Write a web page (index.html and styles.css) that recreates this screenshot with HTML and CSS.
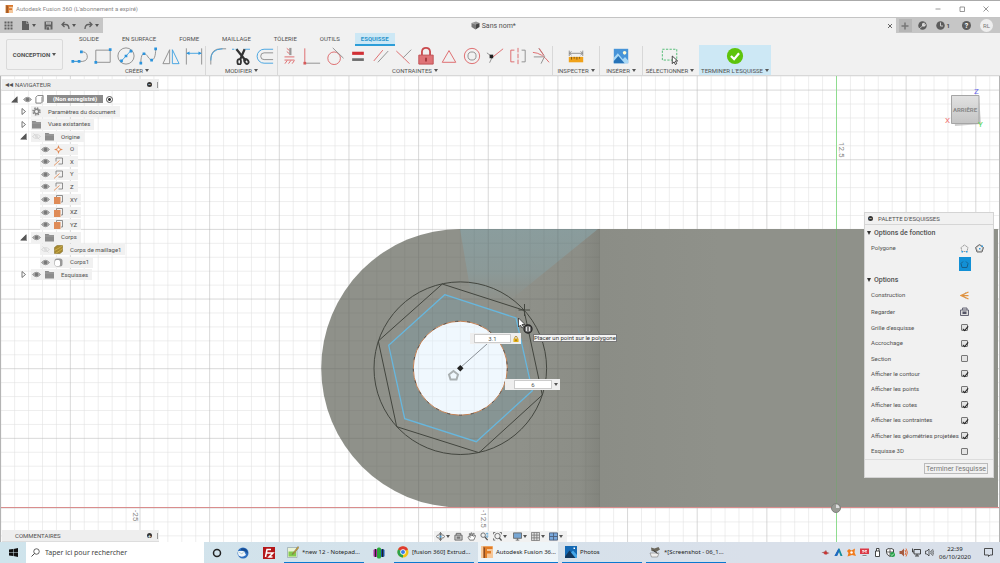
FILE: index.html
```html
<!DOCTYPE html>
<html lang="fr">
<head>
    <meta charset="UTF-8">
    <meta name="viewport" content="width=device-width, initial-scale=1.0">
    <title>Autodesk Fusion 360</title>
    <link rel="stylesheet" href="styles.css">
</head>
<body>
    <!-- Icônes partagées -->
    <svg class="sprite" aria-hidden="true">
        <symbol id="eye" viewBox="0 0 18 18"><path d="M1 9Q9 0 17 9Q9 18 1 9Z" fill="#b5b5b5" stroke="#858585" stroke-width="1.5"/><circle cx="9" cy="9" r="3.6" fill="#777"/></symbol>
        <symbol id="eye-off" viewBox="0 0 18 18"><path d="M1 9Q9 1 17 9Q9 17 1 9ZM3 3L15 15" fill="none" stroke="#d2d2d2" stroke-width="1.6"/><circle cx="9" cy="9" r="3" fill="#dcdcdc"/></symbol>
        <symbol id="folder" viewBox="0 0 18 18"><path d="M0 2h7l2 2h9v13H0z" fill="#8c8c8c"/><path d="M0 6h18" stroke="#b5b5b5"/></symbol>
        <symbol id="axis" viewBox="0 0 18 18"><path d="M4 9V2H17V14H9" fill="none" stroke="#777" stroke-width="1.6"/><path d="M0 17L11 7" stroke="#e39a6c" stroke-width="2"/></symbol>
        <symbol id="plane" viewBox="0 0 18 18"><path d="M5 4V1H17V14H14" fill="none" stroke="#777" stroke-width="1.6"/><path d="M0 4H13V18H0Z" fill="#df8b57"/></symbol>
        <symbol id="open" viewBox="0 0 14 14"><path d="M14 0V14H0Z" fill="#999"/><path d="M12 1V12H1Z" fill="#555"/></symbol>
        <symbol id="closed" viewBox="0 0 14 14"><path d="M4 1V13L11 7Z" fill="#fff" stroke="#666" stroke-width="1.8"/></symbol>
    </svg>

    <header class="titlebar">
        <svg class="i8" viewBox="0 0 24 24"><path d="M0 0H24V24H0Z" fill="#f3c79d"/><path d="M4 0H24V5H12V10H21V15H12V24H4Z" fill="#d8782d"/><path d="M4 0L8 3V24H4Z" fill="#8e4d20"/></svg>
        <span class="app-name">Autodesk Fusion 360 (L'abonnement a expiré)</span>
        <button class="win" aria-label="Réduire"><svg viewBox="0 0 12 12"><path d="M1 6H11"/></svg></button>
        <button class="win" aria-label="Agrandir"><svg viewBox="0 0 12 12"><path d="M2 2H11V11H2Z"/></svg></button>
        <button class="win" aria-label="Fermer"><svg viewBox="0 0 12 12"><path d="M1 1L11 11M11 1L1 11"/></svg></button>
    </header>

    <div class="docbar">
        <div class="quick">
            <button aria-label="Données"><svg class="i9" viewBox="0 0 18 18"><path d="M1 1h4v4H1zM7 1h4v4H7zM13 1h4v4h-4zM1 7h4v4H1zM7 7h4v4H7zM13 7h4v4h-4zM1 13h4v4H1zM7 13h4v4H7zM13 13h4v4h-4z" fill="#606060"/></svg></button>
            <button class="drop" aria-label="Fichier"><svg class="i9" viewBox="0 0 18 18"><path d="M2 0h9v6h5v12H2zM12 0l4 5h-4z" fill="#606060"/></svg></button>
            <button aria-label="Enregistrer"><svg class="i9" viewBox="0 0 18 18"><path d="M1 1h16v16H1z" fill="#606060"/><path d="M4 2h10v5H4zM5 11h8v6H5z" fill="#c6c6c6"/><path d="M5 4h8M6 13h4v4H6z" fill="#606060" stroke="#606060"/></svg></button>
            <button class="drop" aria-label="Annuler"><svg class="i9" viewBox="0 0 18 18"><path d="M7 2L2 7L7 12M2 7H9Q16 7 16 16" fill="none" stroke="#606060" stroke-width="2.6"/></svg></button>
            <button class="drop" aria-label="Rétablir"><svg class="i9" viewBox="0 0 18 18"><path d="M11 2L16 7L11 12M16 7H9Q2 7 2 16" fill="none" stroke="#606060" stroke-width="2.6"/></svg></button>
        </div>
        <div class="doc-tab">
            <svg class="i9" viewBox="0 0 18 18"><path d="M1 4L10 1L17 4L10 7Z" fill="#999"/><path d="M1 4L9 7V17L1 12Z" fill="#777"/><path d="M9 7L17 4V12L9 17Z" fill="#444"/></svg>
            <span>Sans nom*</span>
        </div>
        <button class="doc-close" aria-label="Fermer le document"><svg viewBox="0 0 12 12"><path d="M2 2L10 10M10 2L2 10" stroke="#666" stroke-width="2"/></svg></button>
        <div class="account">
            <button class="plus" aria-label="Nouveau"><svg class="i8" viewBox="0 0 16 16"><path d="M8 1V15M1 8H15" stroke="#777" stroke-width="3"/></svg></button>
            <button aria-label="Extensions"><svg class="i9" viewBox="0 0 18 18"><circle cx="9" cy="9" r="8.5" fill="#5c5c5c"/><path d="M2 16L10 9M9 9Q7 4 13 4L11 8L15 7Q15 12 9 10Z" fill="#ddd" stroke="#ddd" stroke-width="1.5"/></svg></button>
            <button class="jobs"><svg class="i9" viewBox="0 0 18 18"><circle cx="9" cy="9" r="8.5" fill="#5c5c5c"/><path d="M9 3V10H14" fill="none" stroke="#ccc" stroke-width="2"/></svg>1</button>
            <button class="help">?</button>
            <button class="avatar">RL</button>
        </div>
    </div>

    <div class="ribbon">
        <button class="workspace drop">CONCEPTION</button>
        <div class="ribbon-main">
            <nav class="tabs">
                <a href="#">SOLIDE</a>
                <a href="#">EN SURFACE</a>
                <a href="#">FORME</a>
                <a href="#">MAILLAGE</a>
                <a href="#">TÔLERIE</a>
                <a href="#">OUTILS</a>
                <a href="#" class="active">ESQUISSE</a>
            </nav>
            <div class="groups">
                <section class="group create">
                    <div class="tools">
                        <button aria-label="Ligne"><svg viewBox="0 0 40 40"><path d="M4 32H26Q38 30 36 19Q34 10 24 11" class="g"/><path d="M4 32H18" class="b"/><path class="p" d="M1 29h6v6H1zM15 29h6v6h-6zM20 8h6v6h-6z"/></svg></button>
                        <button aria-label="Rectangle"><svg viewBox="0 0 40 40"><path d="M4 7H36V34H4Z" class="g"/><path class="p" d="M33 3h6v6h-6zM1 31h6v6H1z"/></svg></button>
                        <button aria-label="Cercle"><svg viewBox="0 0 40 40"><circle cx="20" cy="20" r="18" class="g"/><path d="M10 31L30 9" class="b"/><path class="p" d="M7 28h6v6H7zM17 17h6v6h-6zM28 6h6v6h-6z"/></svg></button>
                        <button aria-label="Spline"><svg viewBox="0 0 40 40"><path d="M4 37C4 8 14 12 20 22S37 34 37 4" class="g"/><path class="p" d="M1 33h6v6H1zM8 12h6v6H8zM25 26h6v6h-6zM34 1h6v6h-6z"/></svg></button>
                        <button aria-label="Symétrie"><svg viewBox="0 0 40 40"><path d="M17 6V37H2Z" class="g"/><path d="M23 6V37H38Z" class="b"/></svg></button>
                        <button aria-label="Cote"><svg viewBox="0 0 40 40"><path d="M3 3V39M37 3V39" class="g"/><path d="M4 14H36" class="b"/><path class="p" d="M3 14L10 10V18ZM37 14L30 10V18Z"/></svg></button>
                    </div>
                    <button class="group-name drop">CRÉER</button>
                </section>
                <section class="group modify">
                    <div class="tools">
                        <button aria-label="Congé"><svg viewBox="0 0 40 40"><path d="M4 39V24Q6 4 26 4H38" class="g"/><path d="M4 30Q3 5 30 4" class="b"/></svg></button>
                        <button aria-label="Ajuster"><svg viewBox="0 0 40 40"><path d="M0 5H15" class="b" stroke-dasharray="5 3"/><path d="M27 5H40" class="b"/><path d="M10 5L31 31M28 5L18 28" stroke="#333" stroke-width="5" fill="none"/><ellipse cx="16" cy="33" rx="4" ry="6" fill="none" stroke="#333" stroke-width="4"/><ellipse cx="32" cy="32" rx="4" ry="6" fill="none" stroke="#333" stroke-width="4" transform="rotate(-35 32 32)"/></svg></button>
                        <button aria-label="Décaler"><svg viewBox="0 0 40 40"><path d="M38 5H18A15 15 0 0 0 18 36H38" class="b" stroke-width="3"/><path d="M38 13H18A7 7 0 0 0 18 28H38" class="g" stroke-width="3"/></svg></button>
                    </div>
                    <button class="group-name drop">MODIFIER</button>
                </section>
                <section class="group constraints">
                    <div class="tools">
                        <button aria-label="Horizontal"><svg viewBox="0 0 40 40"><path d="M23 2V18" stroke="#999" stroke-width="5"/><path d="M15 3L21 8M15 10L21 15M10 22H32M10 29H32M11 37L16 30M19 37L24 30M27 37L32 30" class="r"/></svg></button>
                        <button aria-label="Coïncident"><svg viewBox="0 0 40 40"><path d="M4 36H38" class="g"/><path d="M4 3V36" class="r"/><path d="M1 33h6v6H1z" fill="#d65a5a"/></svg></button>
                        <button aria-label="Tangent"><svg viewBox="0 0 40 40"><circle cx="18" cy="25" r="14" class="r"/><path d="M15 2L39 25" class="g"/></svg></button>
                        <button aria-label="Égal"><svg viewBox="0 0 40 40"><path d="M7 14H33" stroke="#d12f35" stroke-width="7"/><path d="M7 28H33" stroke="#6d6d6d" stroke-width="6"/></svg></button>
                        <button aria-label="Parallèle"><svg viewBox="0 0 40 40"><path d="M4 31L24 7" class="r"/><path d="M13 34L36 9" class="g"/></svg></button>
                        <button aria-label="Perpendiculaire"><svg viewBox="0 0 40 40"><path d="M3 9L20 25L32 37" class="r"/><path d="M18 24L36 6" class="g"/></svg></button>
                        <button aria-label="Bloquer"><svg viewBox="0 0 40 40"><path d="M11 18V10Q12 2 20 2T29 10V18" fill="none" stroke="#c9484c" stroke-width="4"/><path d="M4 18H36V38H4Z" fill="#df7377" stroke="#bd4d51" stroke-width="2"/><path d="M20 24V32" stroke="#8b2226" stroke-width="3"/></svg></button>
                        <button aria-label="Milieu"><svg viewBox="0 0 40 40"><path d="M20 8L35 34H5Z" class="r"/></svg></button>
                        <button aria-label="Concentrique"><svg viewBox="0 0 40 40"><circle cx="20" cy="20" r="17" class="r"/><circle cx="20" cy="20" r="9" class="g"/></svg></button>
                        <button aria-label="Colinéaire"><svg viewBox="0 0 40 40"><path d="M2 13L14 22L8 35" class="g"/><path d="M13 24L38 4" class="r"/><path d="M8 17h8v8H8z" fill="#222"/></svg></button>
                        <button aria-label="Symétrique"><svg viewBox="0 0 40 40"><path d="M12 7H4V33H12" class="r"/><path d="M28 7H36V33H28" class="g"/><path d="M20 2V38" class="r" stroke-dasharray="10 3"/></svg></button>
                        <button aria-label="Courbure"><svg viewBox="0 0 40 40"><path d="M2 12Q22 13 38 34" class="r"/><path d="M15 3L28 21L20 37M4 22H24" class="g"/><path d="M16 3L26 18" class="r"/></svg></button>
                    </div>
                    <button class="group-name drop">CONTRAINTES</button>
                </section>
                <section class="group inspect">
                    <div class="tools"><button aria-label="Mesurer"><svg viewBox="0 0 40 40"><path d="M5 8V20M35 8V20M5 14H35M5 14L10 10M5 14L10 18M35 14L30 10M35 14L30 18" class="g"/><path d="M4 22H36V34H4Z" fill="#f0a21a"/><path d="M10 22V28M16 22V26M22 22V28M28 22V26" stroke="#805915" stroke-width="2"/></svg></button></div>
                    <button class="group-name drop">INSPECTER</button>
                </section>
                <section class="group insert">
                    <div class="tools"><button aria-label="Insérer"><svg viewBox="0 0 40 40"><path d="M4 4H36V36H4Z" fill="#4794d8"/><circle cx="28" cy="13" r="4" fill="#fffbd5"/><path d="M4 24L13 14L24 27L29 22L36 30V36H4Z" fill="#a8d8f6"/><path d="M4 31L14 20L28 36H4Z" fill="#2673b8"/></svg></button></div>
                    <button class="group-name drop">INSÉRER</button>
                </section>
                <section class="group select">
                    <div class="tools"><button aria-label="Sélectionner"><svg viewBox="0 0 40 40"><path d="M3 5H35V29H3Z" fill="none" stroke="#45b86b" stroke-width="2" stroke-dasharray="5 3"/><path d="M25 20V37L29 33L32 39L35 37L32 31H37Z" fill="#fff" stroke="#333" stroke-width="2"/></svg></button></div>
                    <button class="group-name drop">SÉLECTIONNER</button>
                </section>
                <section class="group finish">
                    <div class="tools"><button aria-label="Terminer l'esquisse"><svg viewBox="0 0 40 40"><circle cx="20" cy="20" r="18" fill="#5ec40c"/><path d="M11 20L18 27L29 14" fill="none" stroke="#fff" stroke-width="5"/></svg></button></div>
                    <button class="group-name drop">TERMINER L'ESQUISSE</button>
                </section>
            </div>
        </div>
    </div>

    <main class="canvas">
        <svg class="scene" viewBox="0 76 1000 466" preserveAspectRatio="xMidYMid slice">
            <defs>
                <pattern id="minor" x="836" y="507.5" width="13.93" height="13.93" patternUnits="userSpaceOnUse"><path d="M0 0H13.93M0 0V13.93" stroke="#000" stroke-opacity=".13" fill="none"/></pattern>
                <pattern id="major" x="836" y="507.5" width="69.65" height="69.65" patternUnits="userSpaceOnUse"><path d="M0 0H69.65M0 0V69.65" stroke="#000" stroke-opacity=".18" fill="none"/></pattern>
                <linearGradient id="shade"><stop offset="0" stop-color="#8f918a"/><stop offset=".75" stop-color="#8c8e87"/><stop offset="1" stop-color="#82847d"/></linearGradient>
                <linearGradient id="block"><stop offset="0" stop-color="#8b8d86"/><stop offset=".3" stop-color="#8f918a"/></linearGradient>
                <linearGradient id="beam" x2="0" y2="1"><stop offset="0" stop-color="#89a1a4" stop-opacity=".75"/><stop offset=".6" stop-color="#899fa1" stop-opacity=".6"/><stop offset="1" stop-color="#899a9c" stop-opacity="0"/></linearGradient>
                <linearGradient id="cube" x2="0" y2="1"><stop offset="0" stop-color="#e2e2e2"/><stop offset="1" stop-color="#c4c4c4"/></linearGradient>
            </defs>
            <path d="M0 76H1000V542H0Z" fill="#fff"/>
            <path d="M0 76H1000V542H0Z" fill="url(#minor)"/>
            <path d="M0 76H1000V542H0Z" fill="url(#major)"/>
            <path d="M600 229H460.500A139.250 139.250 0 0 0 460.500 507.500H600Z" fill="#8f918a"/>
            <path d="M520 229H600V507.500H520Z" fill="url(#shade)"/>
            <path d="M460 229H598L508 302L472 300Z" fill="url(#beam)"/>
            <path d="M444.700 294.700L516 318L532.300 390.700L476.300 441.700L404.700 418.700L388.700 345.300Z" fill="#879594"/>
            <circle cx="460.300" cy="368.200" r="47" fill="#f0f8fe"/>
            <!-- La grille transparaît à travers le corps -->
            <g opacity=".5">
                <path d="M321 229H600V507H321Z" fill="url(#minor)" clip-path="url(#body-clip)"/>
                <path d="M321 229H600V507H321Z" fill="url(#major)" clip-path="url(#body-clip)"/>
            </g>
            <clipPath id="body-clip"><path d="M600 229H460.500A139.250 139.250 0 0 0 460.500 507.500H600Z"/></clipPath>
            <path d="M600 229H998V507.500H600Z" fill="url(#block)"/>
            <path d="M0 507.500H1000" stroke="#d98d8d"/>
            <path d="M836.500 76V229M836.500 507V542" stroke="#8fdc8f"/>
            <path d="M836.500 229V507" stroke="#7f9c7a"/>
            <circle cx="836" cy="508" r="4.500" fill="#999b95" stroke="#80827d"/>
            <path d="M836 508V504.500A3.500 3.500 0 0 1 839.500 508Z" fill="#ddd"/>
            <circle cx="460.300" cy="368.200" r="47" fill="none" stroke="#c58255"/>
            <circle cx="460.300" cy="368.200" r="47" fill="none" stroke="#555" stroke-dasharray="3 9"/>
            <g fill="none" stroke="#43463f">
                <circle cx="460.300" cy="368.200" r="86.300"/>
                <path d="M442.300 284L524 310.300L542.300 395L479 452.700L396.700 426.700L378.300 341Z"/>
                <path d="M518.500 310H530M524.500 304V316"/>
            </g>
            <path d="M444.700 294.700L516 318L532.300 390.700L476.300 441.700L404.700 418.700L388.700 345.300Z" fill="none" stroke="#67b7de" stroke-width="1.300"/>
            <path d="M460 368L487 344" stroke="#8a9096"/>
            <path d="M460.300 365L463.500 368.300L460.300 371.500L457 368.300Z" fill="#222"/>
            <path d="M453.500 371L458 374.500L456.500 379.500H450.500L449 374.500Z" fill="none" stroke="#aab0b2" stroke-width="2"/>
            <circle cx="528" cy="329" r="4" fill="#777" stroke="#222" stroke-width="1.300"/>
            <path d="M526.500 327V331M529.500 327V331" stroke="#ddd"/>
            <path d="M518.500 318V327L520.500 325L522 328L523.500 327L522 324.500H525Z" fill="#fff" stroke="#222" stroke-width=".7"/>
            <text class="ruler" transform="translate(133 510) rotate(90)">-25</text>
            <text class="ruler" transform="translate(481 510) rotate(90)">-12.5</text>
            <text class="ruler" transform="translate(839 142) rotate(90)">12.5</text>
            <!-- Cube de visualisation -->
            <path d="M975.500 95V122" stroke="#aab"/>
            <path d="M952 97H979L981 124L955 126Z" fill="#999" opacity=".5"/>
            <path d="M951.500 95.500H979V123.500H951.500Z" fill="url(#cube)" stroke="#a5a5a5"/>
            <text class="cube-text" x="965" y="112" text-anchor="middle">ARRIÈRE</text>
            <text class="axis-text" x="974" y="94" fill="#6767ee">Z</text>
            <text class="axis-text" x="945" y="123" fill="#f07070">X</text>
            <text class="axis-text" x="978" y="127" fill="#4fdc4f">Y</text>
        </svg>

        <div class="panels">
            <aside class="browser">
                <header class="bar"><span class="arrows">◂◂</span><h2>NAVIGATEUR</h2><button class="round" aria-label="Réduire">−</button><i class="grip"></i></header>
                <ul class="tree">
                    <li class="l0"><svg class="tw"><use href="#open"/></svg><div class="item root"><svg><use href="#eye"/></svg><svg class="box" viewBox="0 0 20 20"><path d="M2 5L6 1H18V14L14 18H2Z" fill="#fff" stroke="#777" stroke-width="2"/><path d="M14 5V18L18 14V1Z" fill="#aaa"/></svg><span>(Non enregistré)</span><input type="radio" checked aria-label="Activer le composant"></div></li>
                    <li class="l1"><svg class="tw"><use href="#closed"/></svg><div class="item"><svg viewBox="0 0 18 18"><circle cx="9" cy="9" r="7" fill="none" stroke="#888" stroke-width="3" stroke-dasharray="3 2.500"/><circle cx="9" cy="9" r="4.500" fill="none" stroke="#888" stroke-width="3"/></svg><span>Paramètres du document</span></div></li>
                    <li class="l1"><svg class="tw"><use href="#closed"/></svg><div class="item"><svg><use href="#folder"/></svg><span>Vues existantes</span></div></li>
                    <li class="l1"><svg class="tw"><use href="#open"/></svg><div class="item"><svg><use href="#eye-off"/></svg><svg><use href="#folder"/></svg><span>Origine</span></div></li>
                    <li class="l2"><div class="item"><svg><use href="#eye"/></svg><svg viewBox="0 0 18 18"><path d="M9 0L11.500 6.500L18 9L11.500 11.500L9 18L6.500 11.500L0 9L6.500 6.500Z" fill="#e08a55"/><circle cx="9" cy="9" r="2.500" fill="#fff"/></svg><span>O</span></div></li>
                    <li class="l2"><div class="item"><svg><use href="#eye"/></svg><svg><use href="#axis"/></svg><span>X</span></div></li>
                    <li class="l2"><div class="item"><svg><use href="#eye"/></svg><svg><use href="#axis"/></svg><span>Y</span></div></li>
                    <li class="l2"><div class="item"><svg><use href="#eye"/></svg><svg><use href="#axis"/></svg><span>Z</span></div></li>
                    <li class="l2"><div class="item"><svg><use href="#eye"/></svg><svg><use href="#plane"/></svg><span>XY</span></div></li>
                    <li class="l2"><div class="item"><svg><use href="#eye"/></svg><svg><use href="#plane"/></svg><span>XZ</span></div></li>
                    <li class="l2"><div class="item"><svg><use href="#eye"/></svg><svg><use href="#plane"/></svg><span>YZ</span></div></li>
                    <li class="l1"><svg class="tw"><use href="#open"/></svg><div class="item"><svg><use href="#eye"/></svg><svg><use href="#folder"/></svg><span>Corps</span></div></li>
                    <li class="l2"><div class="item"><svg><use href="#eye-off"/></svg><svg viewBox="0 0 18 18"><path d="M1 5L6 1H17V13L12 17H1Z" fill="#a88a31" stroke="#76601d"/><path d="M1 11L12 5L17 1M3 17L12 11L17 7" stroke="#d8bb57" fill="none" stroke-width="1.500"/></svg><span>Corps de maillage1</span></div></li>
                    <li class="l2"><div class="item"><svg><use href="#eye"/></svg><svg viewBox="0 0 18 18"><rect x="1" y="1" width="16" height="16" rx="5" fill="#999"/><rect x="2" y="4" width="10" height="12" rx="3" fill="#fff"/></svg><span>Corps1</span></div></li>
                    <li class="l1"><svg class="tw"><use href="#closed"/></svg><div class="item"><svg><use href="#eye"/></svg><svg><use href="#folder"/></svg><span>Esquisses</span></div></li>
                </ul>
            </aside>

            <aside class="palette">
                <header class="palette-head"><button class="round" aria-label="Réduire">−</button><h2>PALETTE D'ESQUISSES</h2></header>
                <h3>Options de fonction</h3>
                <div class="polygon">
                    <span>Polygone</span>
                    <div class="modes">
                        <button aria-label="Polygone circonscrit"><svg viewBox="0 0 18 18"><path d="M9 2L16 7L14 15H4L2 7Z" fill="none" stroke="#777" stroke-width="1.500" stroke-dasharray="3 1"/><path d="M3 14h3v3H3zM12 14h3v3h-3z" fill="#2d9be0"/></svg></button>
                        <button aria-label="Polygone inscrit"><svg viewBox="0 0 18 18"><path d="M9 1L17 7L14 16H4L1 7Z" fill="none" stroke="#666" stroke-width="2"/><circle cx="9" cy="9" r="6" fill="none" stroke="#777"/><path d="M8 8h3v3H8zM13 3h3v3h-3z" fill="#2d9be0"/></svg></button>
                        <button class="on" aria-label="Polygone par arête"><svg viewBox="0 0 18 18"><path d="M6 3L2 7L4 15H14L16 7L12 3" fill="none" stroke="#17608c" stroke-width="2"/></svg></button>
                    </div>
                </div>
                <h3>Options</h3>
                <div class="options">
                    <div class="option">Construction<button aria-label="Construction"><svg viewBox="0 0 18 18"><path d="M17 2L2 9L17 16M2 9H17" fill="none" stroke="#e5943d" stroke-width="2.500"/><path d="M12 2L7 9L12 16" fill="none" stroke="#888" stroke-dasharray="2 2"/></svg></button></div>
                    <div class="option">Regarder<button aria-label="Regarder"><svg viewBox="0 0 18 18"><path d="M1 6H17V17H1ZM5 6V2H14V6" fill="#ddd" stroke="#667" stroke-width="2"/><path d="M5 9H13V14H5Z" fill="#556"/></svg></button></div>
                    <label class="option">Grille d'esquisse<input type="checkbox" checked></label>
                    <label class="option">Accrochage<input type="checkbox" checked></label>
                    <label class="option">Section<input type="checkbox"></label>
                    <label class="option">Afficher le contour<input type="checkbox" checked></label>
                    <label class="option">Afficher les points<input type="checkbox" checked></label>
                    <label class="option">Afficher les cotes<input type="checkbox" checked></label>
                    <label class="option">Afficher les contraintes<input type="checkbox" checked></label>
                    <label class="option">Afficher les géométries projetées<input type="checkbox" checked></label>
                    <label class="option">Esquisse 3D<input type="checkbox"></label>
                </div>
                <footer><button class="end">Terminer l'esquisse</button></footer>
            </aside>
        </div>

        <div class="bottom">
            <div class="bar comments"><h2>COMMENTAIRES</h2><button class="round" aria-label="Ajouter">+</button><i class="grip"></i></div>
            <div class="navbar">
                <button class="drop" aria-label="Orbite"><svg viewBox="0 0 20 20"><path d="M10 1V19M7 4L10 1L13 4M7 16L10 19L13 16" class="d"/><ellipse cx="10" cy="10" rx="9" ry="4" class="d"/><circle cx="10" cy="10" r="2.500" fill="#4a9bd0"/></svg></button>
                <button aria-label="Regarder"><svg viewBox="0 0 20 20"><path d="M2 7H18V18H2ZM5 7V3H15V7" fill="#ccc" stroke="#666" stroke-width="2"/><path d="M6 10H14V15H6Z" fill="#777"/></svg></button>
                <button aria-label="Panoramique"><svg viewBox="0 0 20 20"><path d="M6 18L2 11L4 9L7 12L5 4L7 3L9 9V2H11L12 9L14 3H16L15 10L18 7L19 9L15 18Z" fill="#fff" stroke="#555" stroke-width="1.600"/></svg></button>
                <button aria-label="Zoom"><svg viewBox="0 0 20 20"><circle cx="7" cy="7" r="5" class="d"/><path d="M11 11L17 18" stroke="#555" stroke-width="3"/><path d="M16 2V12M13 5L16 2L19 5M13 9L16 12L19 9" stroke="#4a9bd0" fill="none" stroke-width="1.500"/></svg></button>
                <button class="drop" aria-label="Ajuster"><svg viewBox="0 0 20 20"><circle cx="10" cy="9" r="6" class="d"/><path d="M14 13L19 19" stroke="#555" stroke-width="3"/><path d="M1 5V1H5M15 1H19V5M1 14V18H5" class="d"/></svg></button>
                <button class="drop display" aria-label="Affichage"><svg viewBox="0 0 20 20"><path d="M1 2H19V14H1Z" fill="#78a7d4" stroke="#666" stroke-width="2"/><path d="M6 18H14M10 14V18" class="d"/></svg></button>
                <button class="drop" aria-label="Grille"><svg viewBox="0 0 20 20"><path d="M1 1H19V19H1ZM1 7H19M1 13H19M7 1V19M13 1V19" fill="#ddd" stroke="#777" stroke-width="1.800"/></svg></button>
                <button class="drop" aria-label="Fenêtres"><svg viewBox="0 0 20 20"><path d="M1 2H19V18H1ZM1 10H19M10 2V18" fill="#79a8dc" stroke="#4c5f7a" stroke-width="2"/></svg></button>
            </div>
        </div>

        <!-- Saisie de cotes au curseur -->
        <div class="entry radius"><input type="text" value="3.1" aria-label="Rayon"><svg viewBox="0 0 14 16"><path d="M4 8V5Q4 2 7 2T10 5V8" fill="none" stroke="#a8811d" stroke-width="2"/><path d="M1 7H13V15H1Z" fill="#e6b21c"/><path d="M7 9V13" stroke="#6b5008" stroke-width="2"/></svg></div>
        <div class="entry sides"><input type="text" value="6" aria-label="Nombre de côtés"><button class="drop" aria-label="Choisir"></button></div>
        <div class="tooltip">Placer un point sur le polygone</div>
    </main>

    <footer class="taskbar">
        <button class="start" aria-label="Démarrer"><svg class="i9" viewBox="0 0 18 18"><path d="M0 3L8 2V8.500H0ZM9 2L18 0V8.500H9ZM0 9.500H8V16L0 15ZM9 9.500H18V18L9 16Z" fill="#111"/></svg></button>
        <label class="search"><svg class="i9" viewBox="0 0 18 18"><circle cx="11" cy="7" r="5.500" fill="none" stroke="#333" stroke-width="1.500"/><path d="M7 11L1 17" stroke="#333" stroke-width="1.800"/></svg><input type="text" placeholder="Taper ici pour rechercher" aria-label="Rechercher"></label>
        <button class="pin" aria-label="Cortana"><svg viewBox="0 0 24 24"><circle cx="12" cy="12" r="7" fill="none" stroke="#222" stroke-width="3"/></svg></button>
        <button class="pin" aria-label="Thunderbird"><svg viewBox="0 0 24 24"><circle cx="12" cy="12" r="11" fill="#2d6fc0"/><path d="M1 8L14 8L18 16Q10 22 3 17Z" fill="#eef5fc"/><path d="M2 9L10 14L14 8" fill="none" stroke="#8aa" /><path d="M8 3Q20 0 22 13Q17 7 8 6Z" fill="#174c91"/></svg></button>
        <button class="pin" aria-label="FileZilla"><svg viewBox="0 0 24 24"><path d="M0 0H24V24H0Z" fill="#b4171a"/><path d="M5 20L8 5H16M7 12H14M13 12H20L12 20H19" fill="none" stroke="#fff" stroke-width="3"/></svg></button>
        <button class="task"><svg viewBox="0 0 24 24"><path d="M1 3H20V23H1Z" fill="#e9f3d5" stroke="#789"/><path d="M3 11H18V21H3Z" fill="#82c94d"/><path d="M22 1L12 14L10 17L14 15L24 3Z" fill="#d7a129" stroke="#665"/></svg><span>*new 12 - Notepad...</span></button>
        <button class="pin" aria-label="Classeur"><svg viewBox="0 0 24 24"><rect x="1" y="4" width="8" height="16" rx="3" fill="#a52e9c"/><rect x="15" y="4" width="8" height="16" rx="3" fill="#1b50a0"/><rect x="8" y="1" width="8" height="22" rx="3" fill="#29a638"/><path d="M5 4V20M19 4V20" stroke="#222" stroke-width="2"/></svg></button>
        <button class="task"><svg viewBox="0 0 24 24"><circle cx="12" cy="12" r="11" fill="#f2c314"/><path d="M12 12L2 7A11 11 0 0 1 22 7Z" fill="#de3b30"/><path d="M12 12L2 7A11 11 0 0 0 12 23Z" fill="#2ba24c"/><circle cx="12" cy="12" r="5.500" fill="#fff"/><circle cx="12" cy="12" r="4" fill="#397de8"/></svg><span>[fusion 360] Extrud...</span></button>
        <button class="task current"><svg viewBox="0 0 24 24"><path d="M0 0H24V24H0Z" fill="#f6c798"/><path d="M5 1H23V6H12V10H20V15H12V24H5Z" fill="#e17d26"/><path d="M5 1L8 4V24H5Z" fill="#8e4d20"/></svg><span>Autodesk Fusion 36...</span></button>
        <button class="task"><svg viewBox="0 0 24 24"><path d="M0 0H24V24H0Z" fill="#1369b4"/><path d="M0 21L9 9L22 24H0Z" fill="#10375d"/><path d="M12 13L16 9L24 18V24H21Z" fill="#43a5e8"/><path d="M17 3h3v3h-3z" fill="#fff"/></svg><span>Photos</span></button>
        <button class="task"><svg viewBox="0 0 24 24"><path d="M2 14H20L17 22H5Z" fill="#eee" stroke="#666"/><path d="M4 3L11 5L19 2L22 7L14 12L5 10Z" fill="#6b675c"/><path d="M9 9L17 15" stroke="#333" stroke-width="2"/></svg><span>*[Screenshot - 06_1...</span></button>
        <div class="tray">
            <svg viewBox="0 0 18 18"><path d="M1 9L7 7L10 4L12 8L17 10L11 13Z" fill="#a66"/><circle cx="9" cy="10" r="3" fill="#c33"/></svg>
            <svg viewBox="0 0 18 18"><path d="M9 1L1 16H6L10 8L13 16H17L11 1Z" fill="#168e9b"/><path d="M9 1L1 16H6L11 4Z" fill="#2267c5"/></svg>
            <svg viewBox="0 0 18 18"><path d="M4 2L9 5L16 1L15 9L18 16L10 14L1 17L3 10L0 6Z" fill="#f27b1b"/><circle cx="9" cy="9" r="2.500" fill="#fff"/></svg>
            <svg viewBox="0 0 18 18"><path d="M0 1H18V12H0Z" fill="#db3946"/><path d="M4 5H8V8H4M14 5H10V8H14M6 16H12" fill="none" stroke="#fff" stroke-width="1.500"/><path d="M5 15H13" stroke="#888" stroke-width="2"/></svg>
            <svg viewBox="0 0 18 18"><path d="M5 6H13V17H5ZM7 6V1H12V6" fill="#fff" stroke="#333" stroke-width="1.800"/></svg>
            <svg viewBox="0 0 18 18"><path d="M8 0L15 3V9Q14 14 8 17Q1 13 1 9V3Z" fill="#fff" stroke="#333" stroke-width="1.800"/><path d="M8 1V16M1 8H15" stroke="#333" stroke-width="1.500"/><circle cx="13" cy="13" r="5" fill="#24a148"/><path d="M10 13L12 15L16 11" fill="none" stroke="#fff" stroke-width="1.500"/></svg>
            <svg viewBox="0 0 18 18"><path d="M1 6H5L10 1V17L5 12H1Z" fill="#a55b40"/><path d="M12 4Q16 9 12 14M14 1Q20 9 14 17" fill="none" stroke="#e06b3a" stroke-width="2"/></svg>
            <svg viewBox="0 0 18 18"><path d="M4 3H17V12H4ZM10 12V16M6 16H14M1 1V8H4" fill="none" stroke="#333" stroke-width="1.800"/></svg>
            <svg viewBox="0 0 18 18"><path d="M1 6H4L8 2V16L4 12H1Z" fill="none" stroke="#333" stroke-width="1.500"/><path d="M11 6Q13 9 11 12M13 4Q16 9 13 14M15 2Q20 9 15 16" fill="none" stroke="#444" stroke-width="1.300"/></svg>
        </div>
        <div class="clock"><time>22:39</time><time>06/10/2020</time></div>
        <button class="notif" aria-label="Notifications"><svg class="i9" viewBox="0 0 18 18"><path d="M1 1H17V14H12L9 17V14H1Z" fill="none" stroke="#333" stroke-width="1.700"/></svg></button>
    </footer>
</body>
</html>
```
FILE: styles.css
```css
* {
    box-sizing: border-box;
}
body {
    margin: 0;
    min-height: 100vh;
    display: flex;
    flex-direction: column;
    font-family: Roboto, "Liberation Sans", sans-serif;
    font-size: 6px;
    line-height: 8px;
    color: #505050;
    background: #f1f1f1;
}
button {
    display: flex;
    align-items: center;
    justify-content: center;
    margin: 0;
    padding: 0;
    border: none;
    background: none;
    font: inherit;
    color: inherit;
}
h2, h3, ul {
    margin: 0;
    padding: 0;
    font-size: 6px;
    font-weight: normal;
}
a {
    color: inherit;
    text-decoration: none;
}
svg {
    display: block;
    flex: none;
}
.sprite {
    position: absolute;
    width: 0;
    height: 0;
}
.i8 {
    width: 8px;
    height: 8px;
}
.i9 {
    width: 9px;
    height: 9px;
}
.drop::after {
    content: "";
    margin-left: 2px;
    border: 2px solid transparent;
    border-top: 3px solid #555;
    border-bottom: 0;
}

/* Barre de titre */
.titlebar {
    display: flex;
    align-items: center;
    height: 17px;
    padding: 0 2px 0 5px;
    border-top: 1px solid #aaa;
    background: #fff;
}
.app-name {
    margin-left: 3px;
    flex: 1;
    color: #888;
}
.win {
    width: 24px;
}
.win svg {
    width: 6px;
    height: 6px;
    fill: none;
    stroke: #777;
    stroke-width: 1.5;
}

/* Onglets de documents */
.docbar {
    display: flex;
    height: 16px;
    border-top: 1px solid #c4c4c4;
}
.quick {
    display: flex;
    align-items: center;
    gap: 8px;
    width: 103px;
    padding-left: 4px;
    background: #c6c6c6;
}
.doc-tab {
    flex: 1;
    display: flex;
    align-items: center;
    justify-content: center;
    gap: 2px;
    font-size: 7px;
}
.doc-close {
    width: 12px;
}
.doc-close svg {
    width: 6px;
    height: 6px;
}
.account {
    display: flex;
    align-items: center;
    gap: 9px;
    padding: 0 7px 0 3px;
    background: #c6c6c6;
}
.plus {
    width: 13px;
    height: 13px;
    background: #b6b6b6;
}
.account button:nth-child(2) {
    margin-left: -3px;
}
.jobs {
    gap: 2px;
    font-weight: bold;
}
.help {
    width: 9px;
    height: 9px;
    border-radius: 50%;
    background: #5c5c5c;
    color: #fff;
    font-size: 7px;
    font-weight: bold;
    margin-left: 3px;
}
.avatar {
    width: 13px;
    height: 13px;
    border-radius: 50%;
    background: #eee;
    color: #777;
}

/* Ruban */
.ribbon {
    display: flex;
    height: 43px;
    border-bottom: 1px solid #d8d8d8;
    background: #f1f1f1;
}
.workspace {
    width: 57px;
    height: 31px;
    margin: 6px 6px 0;
    border: 1px solid #dadada;
    border-radius: 2px;
    font-weight: bold;
}
.ribbon-main {
    flex: 1;
}
.tabs {
    display: flex;
    gap: 23px;
    height: 13px;
    line-height: 12px;
    padding-left: 10px;
}
.tabs .active {
    margin-left: -8px;
    padding: 0 6px;
    background: #cde8f5;
    border-bottom: 2px solid #2d9ed8;
    color: #2a94cc;
    font-weight: bold;
}
.groups {
    display: flex;
    height: 29px;
}
.group {
    display: flex;
    flex-direction: column;
    border-right: 1px solid #d8d8d8;
}
.tools {
    display: flex;
    justify-content: space-around;
    height: 20px;
    align-items: center;
}
.tools svg {
    width: 18px;
    height: 18px;
}
.group-name {
    height: 9px;
    white-space: nowrap;
}
.create {
    width: 137px;
}
.modify {
    width: 72px;
}
.constraints {
    width: 275px;
}
.inspect {
    width: 47px;
}
.insert {
    width: 43px;
}
.select {
    width: 54px;
    border: none;
}
.finish {
    width: 72px;
    margin: -1px 0 0 2px;
    padding-top: 1px;
    border: none;
    background: #cde8f5;
}
.g, .b, .r, .d {
    fill: none;
    stroke-width: 2;
}
.g {
    stroke: #8a8a8a;
}
.b {
    stroke: #3c9fe0;
}
.r {
    stroke: #dc6264;
}
.d {
    stroke: #666;
}
.p {
    fill: #2b93dc;
}

/* Zone de dessin */
.canvas {
    position: relative;
    flex: 1;
    display: flex;
    flex-direction: column;
    border: solid #b4b4b4;
    border-width: 0 1px;
    overflow: hidden;
}
.scene {
    position: absolute;
    inset: 0;
    width: 100%;
    height: 100%;
}
.ruler {
    font-size: 8px;
    fill: #888;
}
.cube-text {
    font-size: 6px;
    font-weight: bold;
    fill: #8a8a8a;
}
.axis-text {
    font-size: 8px;
}
.panels {
    position: relative;
    flex: 1;
    display: flex;
    justify-content: space-between;
    align-items: flex-start;
    padding: 3px 5px 0 1px;
}
.browser {
    width: 157px;
}
.bar {
    display: flex;
    align-items: center;
    height: 12px;
    padding: 0 1px 0 3px;
    background: #eee;
    border-bottom: 1px solid #ddd;
}
.bar h2 {
    flex: 1;
}
.arrows {
    width: 10px;
    font-size: 8px;
}
.round {
    width: 5px;
    height: 5px;
    border-radius: 50%;
    background: #333;
    color: #fff;
    line-height: 5px;
}
.grip {
    width: 2px;
    height: 6px;
    margin-left: 4px;
    border-right: 1px solid #999;
}
.tree {
    display: flex;
    flex-direction: column;
    min-height: 188px;
    margin-top: 2px;
    list-style: none;
}
.tree li {
    flex: 1;
    display: flex;
    align-items: center;
    gap: 4px;
}
.l0 {
    padding-left: 9px;
}
.l1 {
    padding-left: 18px;
}
.l2 {
    padding-left: 38px;
}
.tw {
    width: 7px;
    height: 7px;
}
.item {
    display: flex;
    align-items: center;
    gap: 4px;
    height: 11px;
    padding: 0 4px 0 1px;
    background: #f1f1f1;
    white-space: nowrap;
}
.item svg {
    width: 9px;
    height: 9px;
}
.item span {
    margin-left: 3px;
}
.root {
    gap: 3px;
    background: none;
}
.root span {
    margin: 0;
    padding: 0 6px;
    background: #8b8b8b;
    color: #fff;
    font-weight: bold;
}
input[type="radio"] {
    appearance: none;
    width: 7px;
    height: 7px;
    margin: 0;
    border: 1px solid #555;
    border-radius: 50%;
    background: radial-gradient(#333 35%, #fff 45%);
}

/* Palette d'esquisses */
.palette {
    width: 130px;
    margin-top: 133px;
    border: 1px solid #d4d4d4;
    background: #f1f1f1;
}
.palette-head {
    display: flex;
    align-items: center;
    gap: 5px;
    height: 12px;
    padding-left: 3px;
    border-bottom: 1px solid #d6d6d6;
}
.palette h3 {
    display: flex;
    align-items: center;
    gap: 3px;
    height: 15px;
    padding-left: 2px;
    font-size: 7px;
    font-weight: 500;
}
.palette h3::before {
    content: "";
    border: 2px solid transparent;
    border-top: 4px solid #333;
    border-bottom: 0;
}
.polygon {
    display: flex;
    justify-content: space-between;
    padding: 0 6px;
    height: 32px;
    line-height: 16px;
}
.modes {
    display: grid;
    grid-template-columns: 15px 15px;
    grid-template-rows: 16px 16px;
    place-items: center;
}
.modes svg, .option svg {
    width: 9px;
    height: 9px;
}
.modes .on {
    width: 12px;
    height: 14px;
    background: #1290d6;
}
.options {
    display: flex;
    flex-direction: column;
    min-height: 172px;
}
.option {
    flex: 1;
    display: flex;
    align-items: center;
    justify-content: space-between;
    padding: 0 24px 0 6px;
}
input[type="checkbox"] {
    appearance: none;
    width: 7px;
    height: 7px;
    margin: 0 1px;
    border: 1px solid #777;
    border-radius: 1px;
    background: #e4e4e4;
}
input[type="checkbox"]:checked::after {
    content: "";
    display: block;
    width: 2px;
    height: 5px;
    margin-left: 2px;
    border: solid #222;
    border-width: 0 1px 1px 0;
    transform: rotate(40deg);
}
.palette footer {
    display: flex;
    justify-content: flex-end;
    padding: 3px 5px;
    border-top: 1px solid #ddd;
}
.end {
    height: 11px;
    padding: 0 1px;
    border: 1px solid #bbb;
    font-size: 7px;
    color: #777;
}

/* Barre du bas */
.bottom {
    position: relative;
    display: grid;
    grid-template-columns: 1fr auto 1fr;
    align-items: end;
    padding-left: 1px;
}
.comments {
    width: 157px;
    padding-left: 13px;
}
.navbar {
    display: flex;
    align-items: center;
    gap: 4px;
    height: 11px;
    padding: 0 4px 0 2px;
    background: #f1f1f1;
}
.navbar svg {
    width: 9px;
    height: 9px;
}
.navbar .drop::after {
    margin-left: 1px;
}
.display {
    margin-left: 2px;
}

/* Champs posés sur l'esquisse */
.entry {
    position: absolute;
    display: flex;
    align-items: center;
    height: 11px;
    padding: 1px 2px 1px 4px;
    background: #eee;
}
.entry input {
    height: 9px;
    padding: 0;
    border: 1px solid #ccc;
    background: #fff;
    font: inherit;
    color: #555;
    text-align: center;
}
.radius {
    left: 469px;
    top: 257px;
}
.radius input {
    width: 37px;
}
.radius svg {
    width: 6px;
    height: 8px;
    margin-left: 2px;
}
.sides {
    left: 504px;
    top: 303px;
    padding-left: 9px;
}
.sides input {
    width: 38px;
}
.tooltip {
    position: absolute;
    left: 532px;
    top: 258px;
    border: 1px solid #777;
    background: #f4f4f4;
    line-height: 6px;
    white-space: nowrap;
    color: #333;
}

/* Barre des tâches */
.taskbar {
    display: flex;
    align-items: stretch;
    height: 21px;
    background: linear-gradient(90deg, #cfe4ec, #d9e0ea 75%);
    font-family: "Noto Sans", "Open Sans", sans-serif;
    color: #222;
}
.start {
    width: 26px;
}
.search {
    display: flex;
    align-items: center;
    gap: 5px;
    width: 178px;
    padding-left: 5px;
    background: #fff;
}
.search input {
    flex: 1;
    min-width: 0;
    padding: 0;
    border: none;
    font: inherit;
    font-size: 7px;
}
.search input::placeholder {
    color: #444;
}
.pin {
    width: 26px;
}
.pin svg, .task svg {
    width: 12px;
    height: 12px;
}
.task {
    justify-content: flex-start;
    gap: 3px;
    width: 80px;
    margin: 0 2px;
    padding-left: 3px;
    border-bottom: 1px solid #0b79d0;
    white-space: nowrap;
}
.current {
    background: #edf4f8;
}
.tray {
    display: flex;
    align-items: center;
    gap: 4px;
    margin-left: auto;
}
.tray svg {
    width: 9px;
    height: 9px;
}
.clock {
    display: flex;
    flex-direction: column;
    justify-content: center;
    width: 42px;
    text-align: center;
}
.notif {
    width: 24px;
}
```
